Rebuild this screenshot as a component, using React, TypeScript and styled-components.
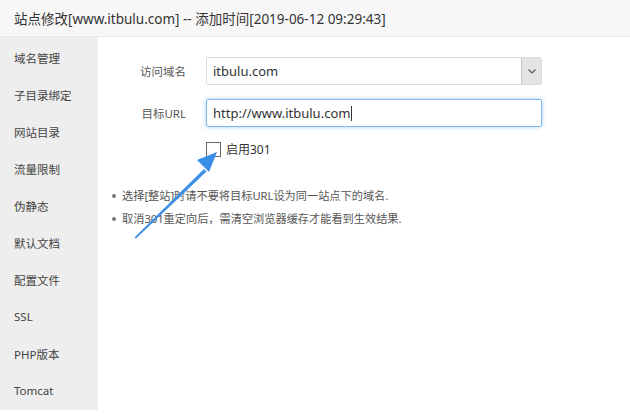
import React from "react";
import styled, { createGlobalStyle } from "styled-components";

const Global = createGlobalStyle`
  html, body { margin: 0; padding: 0; background: #fff; }
  body { font-family: "Noto Sans", "Noto Sans CJK SC", sans-serif; color: #333; }
  * { box-sizing: border-box; }
`;

const Page = styled.div`
  position: relative;
  width: 630px;
  height: 417px;
  overflow: hidden;
  background: #fff;
`;

const Header = styled.div`
  height: 37px;
  background: #f7f7f7;
  border-bottom: 1px solid #e8e8e8;
  display: flex;
  align-items: center;
  padding-left: 14px;
  font-size: 13.5px;
  color: #333;
  padding-bottom: 1px;
`;

const Body = styled.div`
  display: flex;
`;

const Sidebar = styled.div`
  width: 98px;
  height: 373px;
  background: #eeeeee;
  padding-top: 2px;
  display: flex;
  flex-direction: column;
`;

const NavItem = styled.div`
  height: 37px;
  display: flex;
  align-items: center;
  padding-left: 14px;
  font-size: 11.5px;
  color: #444;
`;

const Main = styled.div`
  flex: 1;
  padding: 20px 0 0 14px;
`;

const Row = styled.div`
  display: flex;
  align-items: center;
  margin-bottom: 14px;
`;

const Label = styled.div`
  width: 74px;
  text-align: right;
  font-size: 11.5px;
  color: #555;
  margin-right: 20px;
`;

const SelectBox = styled.div`
  width: 336px;
  height: 28px;
  border: 1px solid #dcdcdc;
  border-radius: 2px;
  display: flex;
  align-items: stretch;
  background: #fff;
`;

const FieldText = styled.div`
  flex: 1;
  display: flex;
  align-items: center;
  padding-left: 6px;
  font-size: 13px;
  color: #333;
`;

const DropBtn = styled.div`
  width: 20px;
  background: #e4e4e4;
  border-left: 1px solid #c8c8c8;
  display: flex;
  align-items: center;
  justify-content: center;
`;

const Input = styled.div`
  width: 336px;
  height: 28px;
  border: 1px solid #7fb8ee;
  border-radius: 2px;
  box-shadow: 0 0 4px rgba(102, 175, 233, 0.6);
  display: flex;
  align-items: center;
  padding-left: 6px;
  font-size: 13px;
  color: #333;
`;

const Caret = styled.span`
  display: inline-block;
  width: 1px;
  height: 15px;
  background: #333;
  margin-left: 1px;
`;

const CheckRow = styled.div`
  display: flex;
  align-items: center;
  margin-left: 94px;
  margin-top: -1px;
`;

const Box = styled.div`
  width: 15px;
  height: 15px;
  border: 1px solid #666;
  background: #fff;
  margin-right: 5px;
`;

const CheckLabel = styled.span`
  font-size: 12px;
  color: #333;
`;

const Tips = styled.ul`
  margin: 26px 0 0 0;
  padding: 0 0 0 10px;
  list-style: none;
`;

const Tip = styled.li`
  position: relative;
  font-size: 11.2px;
  color: #555;
  line-height: 23px;
  &::before {
    content: "";
    position: absolute;
    left: -10px;
    top: 10px;
    width: 4px;
    height: 4px;
    border-radius: 50%;
    background: #777;
  }
`;

const ArrowLayer = styled.svg`
  position: absolute;
  left: 0;
  top: 0;
  pointer-events: none;
`;

const navItems = [
  "域名管理",
  "子目录绑定",
  "网站目录",
  "流量限制",
  "伪静态",
  "默认文档",
  "配置文件",
  "SSL",
  "PHP版本",
  "Tomcat",
];

export default function App() {
  return (
    <>
      <Global />
      <Page>
        <Header>站点修改[www.itbulu.com] -- 添加时间[2019-06-12 09:29:43]</Header>
        <Body>
          <Sidebar>
            {navItems.map((n) => (
              <NavItem key={n}>{n}</NavItem>
            ))}
          </Sidebar>
          <Main>
            <Row>
              <Label>访问域名</Label>
              <SelectBox>
                <FieldText>itbulu.com</FieldText>
                <DropBtn>
                  <svg width="8" height="5" viewBox="0 0 8 5">
                    <path d="M0.5 0.5 L4 4 L7.5 0.5" fill="none" stroke="#555" strokeWidth="1.1" />
                  </svg>
                </DropBtn>
              </SelectBox>
            </Row>
            <Row>
              <Label>目标URL</Label>
              <Input>
                http://www.itbulu.com
                <Caret />
              </Input>
            </Row>
            <CheckRow>
              <Box />
              <CheckLabel>启用301</CheckLabel>
            </CheckRow>
            <Tips>
              <Tip>选择[整站]时请不要将目标URL设为同一站点下的域名.</Tip>
              <Tip>取消301重定向后，需清空浏览器缓存才能看到生效结果.</Tip>
            </Tips>
          </Main>
        </Body>
        <ArrowLayer width="630" height="417" viewBox="0 0 630 417">
          <path d="M134.5 237.5 L204 169 L206.5 171.5 L136 238.5 Z" fill="#3a8ee6" />
          <path d="M217 152 L197 160 L209 172 Z" fill="#3a8ee6" />
        </ArrowLayer>
      </Page>
    </>
  );
}
